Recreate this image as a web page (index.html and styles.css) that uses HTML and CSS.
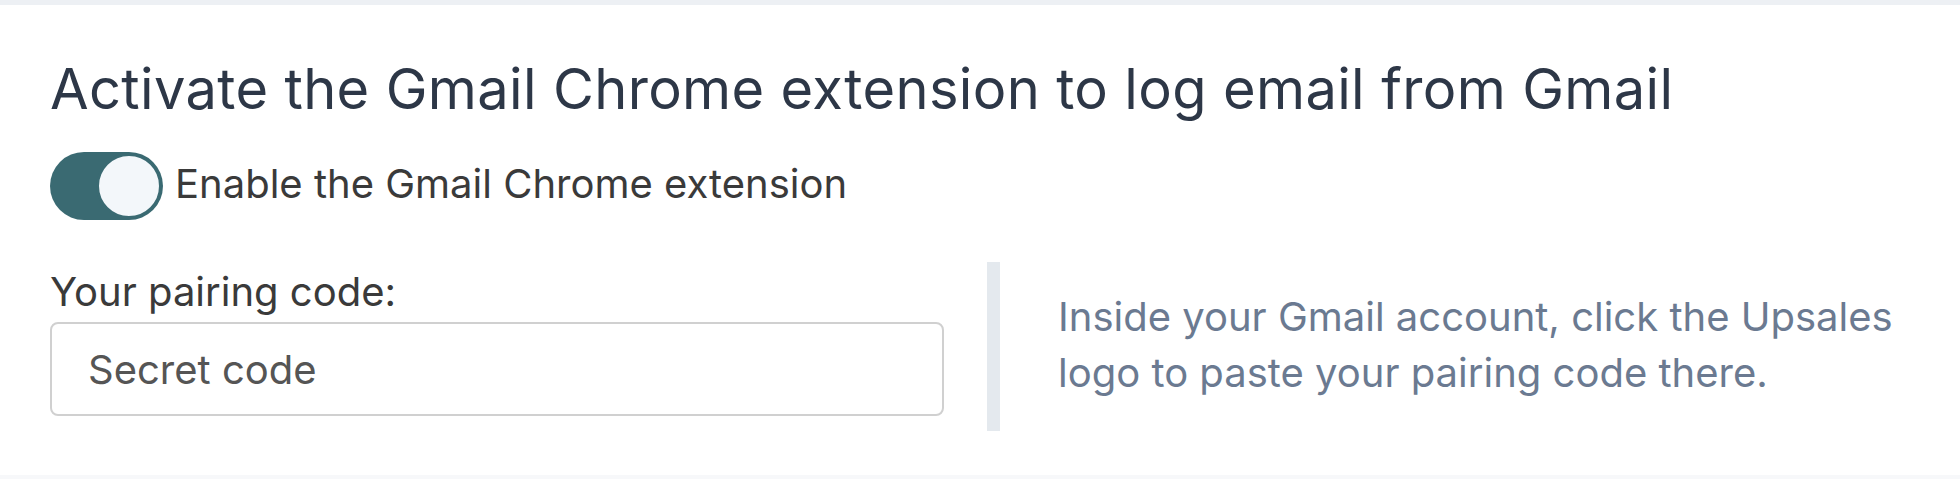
FILE: index.html
```html
<!DOCTYPE html>
<html lang="en">
<head>
  <meta charset="UTF-8" />
  <title>Gmail Chrome extension</title>
  <link rel="stylesheet" href="styles.css">
</head>
<body>
  <div class="panel">
    <h2>Activate the Gmail Chrome extension to log email from Gmail</h2>

    <label class="toggle-row">
      <span class="toggle on"><span class="knob"></span></span>
      <span class="toggle-label">Enable the Gmail Chrome extension</span>
    </label>

    <div class="pairing">
      <div class="pairing-left">
        <label for="code" class="field-label">Your pairing code:</label>
        <input id="code" type="text" placeholder="Secret code" />
      </div>
      <div class="pairing-help">
        Inside your Gmail account, click the Upsales logo to paste your pairing code there.
      </div>
    </div>
  </div>
  <div class="footer-band"></div>
</body>
</html>
```

FILE: styles.css
```css
body {
  margin: 0;
  font-family: Inter, "Noto Sans", sans-serif;
  background-color: #fff;
}
.panel {
  border-top: 5px solid #edf0f4;
  padding: 50px 50px 0 50px;
  height: 420px;
}
h2 {
  margin: 0;
  font-size: 56px;
  font-weight: 400;
  line-height: 68px;
  letter-spacing: 0.35px;
  color: #2d3747;
}
.toggle-row {
  display: flex;
  align-items: center;
  gap: 12px;
  margin-top: 29px;
}
.toggle {
  position: relative;
  width: 113px;
  height: 68px;
  border-radius: 34px;
  background-color: #3a6a72;
}
.toggle .knob {
  position: absolute;
  top: 1px;
  right: 1px;
  width: 66px;
  height: 66px;
  box-sizing: border-box;
  border-radius: 50%;
  border: 3px solid #3a6a72;
  background-color: #f3f7fa;
}
.toggle-label {
  font-size: 40px;
  color: #3a3a3a;
  padding-bottom: 6px;
}
.pairing {
  display: flex;
  margin-top: 42px;
}
.pairing-left {
  flex-shrink: 0;
  width: 894px;
  padding-top: 5px;
}
.field-label {
  display: block;
  font-size: 40px;
  color: #3a3a3a;
  margin-bottom: 6px;
}
input {
  width: 100%;
  height: 94px;
  box-sizing: border-box;
  padding: 0 36px;
  border: 2px solid #d0d0d0;
  border-radius: 8px;
  font-family: Inter, "Noto Sans", sans-serif;
  font-size: 40px;
  color: #555;
}
input::placeholder {
  color: #555;
}
.pairing-help {
  flex: 1;
  margin-left: 43px;
  border-left: 13px solid #e4e9ee;
  padding: 27px 0 30px 58px;
  font-size: 40px;
  line-height: 56px;
  color: #6b7a91;
}
.footer-band {
  height: 4px;
  background-color: #f7f8fa;
}
```
